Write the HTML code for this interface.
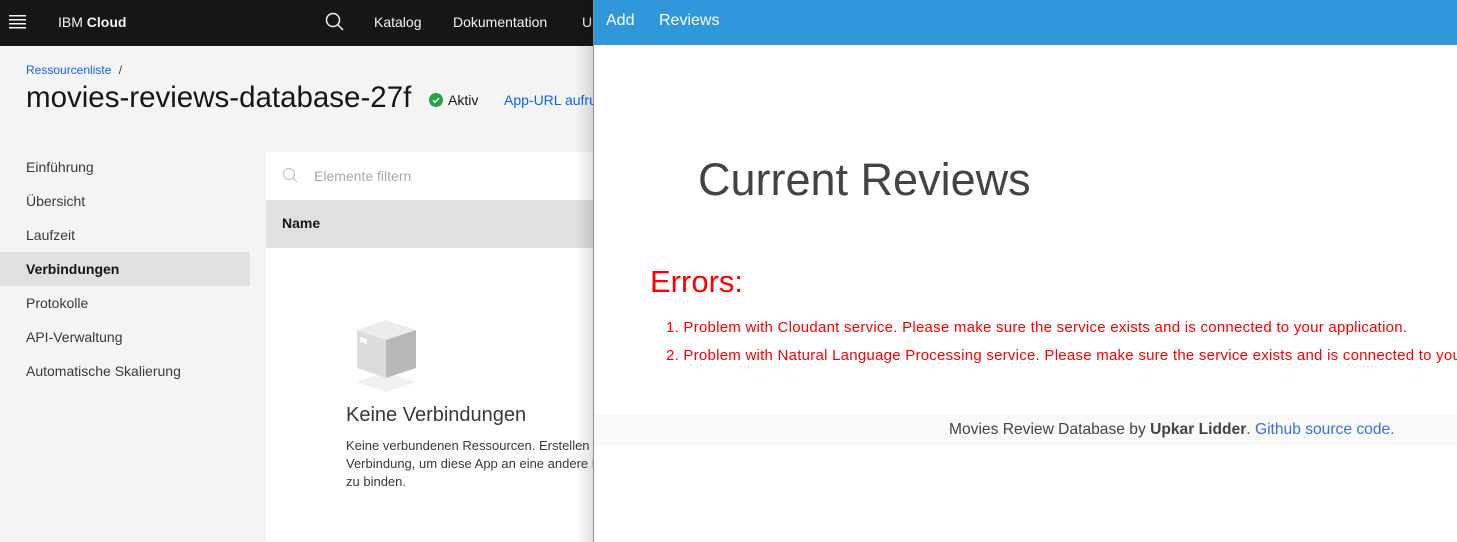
<!DOCTYPE html>
<html><head><meta charset="utf-8"><style>
*{margin:0;padding:0;box-sizing:border-box}
body{width:1457px;height:542px;overflow:hidden;position:relative;font-family:"Liberation Sans",sans-serif;background:#f4f4f4}
.top{position:absolute;left:0;top:0;width:600px;height:46px;background:#161616;color:#f4f4f4;font-size:14px}
.top span{position:absolute;top:14px}
.left{position:absolute;left:0;top:46px;width:593px;height:496px;background:#f4f4f4;overflow:hidden}
.nav div{position:absolute;left:26px;font-size:14px;color:#393939}
.panel{position:absolute;left:593px;top:0;width:864px;height:542px;background:#fff;border-left:1px solid #8d8d8d;overflow:hidden}
.shadow{position:absolute;left:575px;top:0;width:18px;height:542px;background:linear-gradient(to right,rgba(0,0,0,0),rgba(0,0,0,.12))}
.bar{position:absolute;left:0;top:0;width:864px;height:45px;background:#3197db;color:#fff;font-size:16px}
.bar span{position:absolute;top:12px}
.red{color:#f00}
</style></head><body>
<div class="top">
 <svg style="position:absolute;left:9px;top:14px" width="18" height="16"><g fill="#f4f4f4"><rect y="1" width="17" height="1.5"/><rect y="5" width="17" height="1.5"/><rect y="9" width="17" height="1.5"/><rect y="13" width="17" height="1.5"/></g></svg>
 <span style="left:58px">IBM <b>Cloud</b></span>
 <svg style="position:absolute;left:325px;top:12px" width="20" height="20"><circle cx="8" cy="8" r="6.5" fill="none" stroke="#f4f4f4" stroke-width="1.5"/><line x1="13" y1="13" x2="18" y2="18" stroke="#f4f4f4" stroke-width="1.5"/></svg>
 <span style="left:374px">Katalog</span>
 <span style="left:453px">Dokumentation</span>
 <span style="left:582px">U</span>
</div>
<div class="left">
 <div style="position:absolute;left:26px;top:17px;font-size:12px;color:#0f62fe">Ressourcenliste <span style="color:#393939;margin-left:4px">/</span></div>
 <div style="position:absolute;left:26px;top:35px;font-size:29.5px;color:#161616;white-space:nowrap">movies-reviews-database-27f</div>
 <svg style="position:absolute;left:429px;top:47px" width="14" height="14"><circle cx="7" cy="7" r="7" fill="#24a148"/><path d="M4 7.2l2 2 4-4" fill="none" stroke="#fff" stroke-width="1.6"/></svg>
 <div style="position:absolute;left:448px;top:46px;font-size:14px;color:#161616">Aktiv</div>
 <div style="position:absolute;left:504px;top:46px;font-size:14px;color:#0f62fe;white-space:nowrap">App-URL aufrufen</div>
 <div style="position:absolute;left:0;top:206px;width:250px;height:34px;background:#e0e0e0"></div>
 <div class="nav">
  <div style="top:113px">Einführung</div>
  <div style="top:147px">Übersicht</div>
  <div style="top:181px">Laufzeit</div>
  <div style="top:215px;font-weight:bold;color:#161616">Verbindungen</div>
  <div style="top:249px">Protokolle</div>
  <div style="top:283px">API-Verwaltung</div>
  <div style="top:317px">Automatische Skalierung</div>
 </div>
 <div style="position:absolute;left:266px;top:106px;width:334px;height:390px;background:#fff">
  <svg style="position:absolute;left:16px;top:15px" width="18" height="18"><circle cx="7" cy="7" r="5.5" fill="none" stroke="#c6c6c6" stroke-width="1.2"/><line x1="11" y1="11" x2="15" y2="15" stroke="#c6c6c6" stroke-width="1.2"/></svg>
  <div style="position:absolute;left:48px;top:16px;font-size:14px;color:#a8a8a8">Elemente filtern</div>
  <div style="position:absolute;left:0;top:48px;width:334px;height:48px;background:#e0e0e0"></div>
  <div style="position:absolute;left:16px;top:63px;font-size:14px;font-weight:bold;color:#161616">Name</div>
  <svg style="position:absolute;left:88px;top:160px" width="64" height="80"><polygon points="32,60 62,70 32,80 2,70" fill="#f0f0f0"/><polygon points="3,18 32,8 62,18 32,28" fill="#ececec"/><polygon points="3,18 32,28 32,66 3,56" fill="#dcdcdc"/><polygon points="32,28 62,18 62,56 32,66" fill="#b8b8b8"/><polygon points="6,25 13,27 13,32 6,30" fill="#fafafa"/></svg>
  <div style="position:absolute;left:80px;top:252px;font-size:20px;color:#393939">Keine Verbindungen</div>
  <div style="position:absolute;left:80px;top:285px;font-size:13px;line-height:18px;color:#393939;white-space:nowrap">Keine verbundenen Ressourcen. Erstellen Sie eine<br>Verbindung, um diese App an eine andere Ressource<br>zu binden.</div>
 </div>
</div>
<div class="shadow"></div>
<div class="panel">
 <div class="bar"><span style="left:12px">Add</span><span style="left:65px">Reviews</span></div>
 <div style="position:absolute;left:104px;top:154px;font-size:45px;color:#444">Current Reviews</div>
 <div class="red" style="position:absolute;left:56px;top:264px;font-size:31px">Errors:</div>
 <div class="red" style="position:absolute;left:72px;top:314px;font-size:15px;letter-spacing:.25px;white-space:nowrap;line-height:28px">1. Problem with Cloudant service. Please make sure the service exists and is connected to your application.<br>2. Problem with Natural Language Processing service. Please make sure the service exists and is connected to your application.</div>
 <div style="position:absolute;left:0;top:414px;width:864px;height:32px;background:#f9f9f9"></div>
 <div style="position:absolute;left:355px;top:421px;font-size:15.6px;color:#444;white-space:nowrap">Movies Review Database by <b>Upkar Lidder</b>. <span style="color:#3a6fd8">Github source code.</span></div>
</div>
</body></html>
